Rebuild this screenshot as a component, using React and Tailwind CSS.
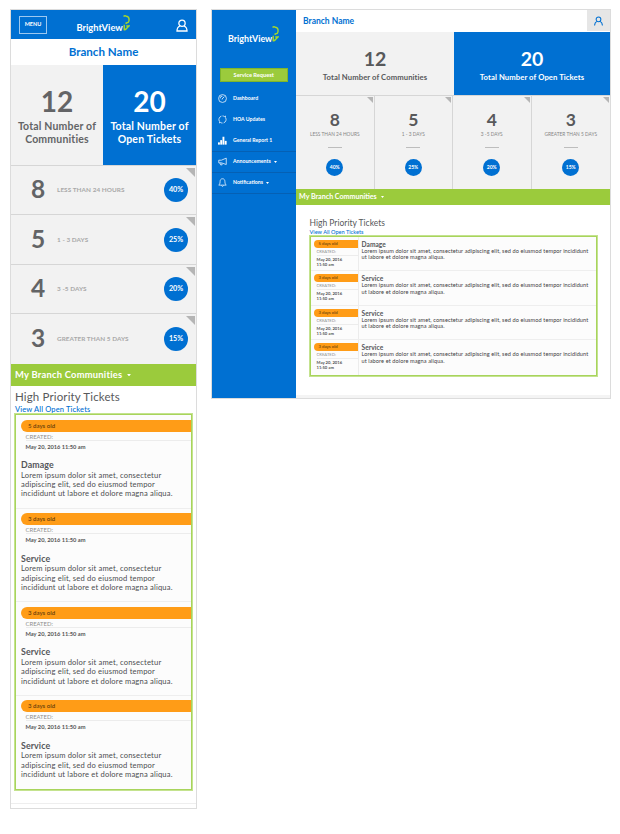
const STATS = [
  { n: "8", label: "LESS THAN 24 HOURS", pct: "40%" },
  { n: "5", label: "1 - 3 DAYS", pct: "25%" },
  { n: "4", label: "3 -5 DAYS", pct: "20%" },
  { n: "3", label: "GREATER THAN 5 DAYS", pct: "15%" },
];

const TICKETS = [
  { age: "5 days old", title: "Damage" },
  { age: "3 days old", title: "Service" },
  { age: "3 days old", title: "Service" },
  { age: "3 days old", title: "Service" },
];

function LogoMark({ className }) {
  return (
    <svg viewBox="0 0 14 32" className={className} fill="none" stroke="#a6d829" strokeWidth="2.8">
      <path d="M1 2.6 Q4 .8 6.5 2.4 Q11.5 3 12 7.5 V11.5 Q11.5 15.5 8 15.5 L5 17" />
      <path d="M2.5 19.5 V29.5 Q5 29.8 7 27 L12 22 H6.5" />
    </svg>
  );
}

function Logo({ className }) {
  return (
    <div className={"flex items-end text-white font-bold whitespace-nowrap " + className}>
      <span>BrightView</span>
      <LogoMark className="w-[7px] h-[16px] shrink-0" />
    </div>
  );
}

function UserIcon({ className, closed }) {
  return (
    <svg viewBox="0 0 24 26" className={className} fill="none" stroke="currentColor">
      <circle cx="12" cy="8.5" r="6.3" />
      {closed
        ? <path d="M8 14 C4 15.5 2 18.5 2 24 H22 C22 18.5 20 15.5 16 14" />
        : <path d="M8 14 C4 15.5 2 19 1.5 25 M16 14 C20 15.5 22 19 22.5 25" />}
    </svg>
  );
}

function Caret({ className }) {
  return (
    <svg viewBox="0 0 6 4" className={className} fill="currentColor">
      <path d="M0 0 H6 L3 4 Z" />
    </svg>
  );
}

function Corner({ className }) {
  return (
    <svg viewBox="0 0 10 10" className={"absolute " + className} fill="#b5b5b5">
      <path d="M0 0 H10 V10 Z" />
    </svg>
  );
}

function MobileTicket({ t, last }) {
  return (
    <div className={"h-[93.6px] pt-[4.5px] pl-[5px] " + (last ? "" : "border-b border-[#eeeeee]")}>
      <div className="h-[12px] rounded-l-full bg-[#ff9c17] pl-[7px] text-[6.1px] leading-[11px] font-medium text-[#5c3a0c]">{t.age}</div>
      <div className="ml-[4.5px] h-[9px] border-b border-[#ececec] text-[5.9px] leading-[9px] text-[#8f8f8f]">CREATED:</div>
      <div className="ml-[4.5px] h-[13px] text-[5.7px] leading-[12px] font-bold text-[#555555]">May 20, 2016 11:50 am</div>
      <div className="mt-[6.6px] h-[10px] text-[8.8px] leading-[10px] font-bold text-[#55565a] tracking-[0.1px]">{t.title}</div>
      <div className="pt-[0.4px] text-[7.6px] leading-[9.4px] text-[#4d4e50] tracking-[0.18px] whitespace-nowrap">
        Lorem ipsum dolor sit amet, consectetur<br />
        adipiscing elit, sed do eiusmod tempor<br />
        incididunt ut labore et dolore magna aliqua.
      </div>
    </div>
  );
}

function Mobile() {
  return (
    <div className="w-[187px] h-[800px] border border-[#dcdcdc] bg-white flex flex-col shrink-0 overflow-hidden">
      <div className="h-[29px] bg-[#0070d2] flex items-center shrink-0 pl-[8px] pr-[8px]">
        <div className="w-[28px] h-[18px] border border-[#9cc8f0] text-white text-[5.5px] font-bold flex items-center justify-center">MENU</div>
        <Logo className="text-[9.3px] leading-[11px] ml-[29.5px] -mt-[4px] [&>span]:translate-y-[2px]" />
        <UserIcon closed className="w-[12px] h-[13px] text-white stroke-[2.6] ml-auto mt-px" />
      </div>
      <div className="h-[26px] shrink-0 flex items-center justify-center text-[11.6px] font-bold text-[#0070d2]">Branch Name</div>
      <div className="h-[101px] shrink-0 flex border-b border-[#d6d6d6] text-center">
        <div className="w-[92px] bg-[#f2f2f2] text-[#636466] pt-[20px]">
          <div className="text-[28px] leading-[32px] font-bold">12</div>
          <div className="mt-[3px] text-[10.5px] leading-[13.2px] font-bold tracking-[0.18px] whitespace-nowrap">Total Number of<br />Communities</div>
        </div>
        <div className="flex-1 bg-[#0070d2] text-white pt-[20px]">
          <div className="text-[28px] leading-[32px] font-bold">20</div>
          <div className="mt-[3px] text-[10.5px] leading-[13.2px] font-bold tracking-[0.18px] whitespace-nowrap">Total Number of<br />Open Tickets</div>
        </div>
      </div>
      {STATS.map((s, i) => (
        <div key={s.n} className={"relative h-[49.4px] shrink-0 bg-[#f2f2f2] flex items-center pl-[20px] pr-[8px] " + (i < 3 ? "border-b border-[#d6d6d6]" : "")}>
          <span className="w-[26px] -mt-[2px] text-[24.5px] leading-[30px] font-bold text-[#636466]">{s.n}</span>
          <span className="flex-1 text-[6.4px] text-[#a9a9a9] font-bold tracking-[0.06px] whitespace-nowrap">{s.label}</span>
          <span className="size-[24px] rounded-full bg-[#0070d2] text-white text-[7.2px] font-bold flex items-center justify-center pt-px">{s.pct}</span>
          <Corner className="top-[2px] right-px size-[9px]" />
        </div>
      ))}
      <div className="h-[22px] shrink-0 bg-[#9bcb3c] flex items-center pl-[4px] text-white text-[9.4px] font-bold tracking-[0.23px]">
        My Branch Communities
        <Caret className="w-[4px] h-[2.5px] ml-[5px] mt-px" />
      </div>
      <div className="pl-[4px] pr-[4px] pt-[4px]">
        <div className="text-[11.5px] leading-[13px] text-[#58595b] tracking-[0.14px]">High Priority Tickets</div>
        <div className="h-[11.5px] text-[7.5px] leading-[13px] text-[#0070d2] font-medium tracking-[0.15px]">View All Open Tickets</div>
        <div className="border border-[#a8d45c] outline outline-[0.5px] outline-[#c4e38f] bg-[#fcfcfc] h-[376px]">
          {TICKETS.map((t, i) => <MobileTicket key={i} t={t} last={i === 3} />)}
        </div>
      </div>
      <div className="mt-[13px] h-px bg-[#eeeeee] shrink-0" />
    </div>
  );
}

function NavIcon({ kind }) {
  return (
    <svg viewBox="0 0 24 24" className="size-[9px] shrink-0" fill="none" stroke="#e4f1fd" strokeWidth="2.2">
      {kind === "dash" && <><circle cx="12" cy="12" r="10.5" /><path d="M10 14 L17 7 M5.5 12 A6.5 6.5 0 0 1 12 5.5 M11 14 h1" /></>}
      {kind === "sync" && <><path d="M3.5 16.5 A9.5 9.5 0 0 1 9 3 M20.500 7.500 A9.5 9.5 0 0 1 15 21 M12 2.500 A9.5 9.5 0 0 1 18.5 5 M12 21.500 A9.5 9.5 0 0 1 5.5 19" /><path d="M20 2 V7 M4 22 V17" /></>}
      {kind === "bars" && <g fill="#fff" stroke="none"><rect x="0" y="17" width="5" height="6" /><rect x="6" y="11" width="5" height="12" /><rect x="12" y="2" width="5" height="21" /><rect x="18" y="13" width="5" height="10" /></g>}
      {kind === "horn" && <><path d="M22 3 V20 L9 15.5 H2 V8.5 H9 Z" /><path d="M5 16 L7 21 H11 L10 17" /></>}
      {kind === "bell" && <><path d="M12 2 C7 2 5.5 6 5.5 10 C5.5 15 4 17 2 19 H22 C20 17 18.5 15 18.5 10 C18.5 6 17 2 12 2 Z" /><path d="M9 20 Q12 25 15 20" /></>}
    </svg>
  );
}

function NavItem({ kind, label, line, caret }) {
  return (
    <div className={"h-[21px] flex items-center pl-[6px] text-white text-[5.2px] font-bold whitespace-nowrap " + (line ? "border-t border-[#0560b4]" : "")}>
      <NavIcon kind={kind} />
      <span className="ml-[6px] pt-px">{label}</span>
      {caret && <Caret className="w-[3px] h-[2px] ml-[3px]" />}
    </div>
  );
}

function DesktopTicket({ t, last }) {
  return (
    <div className={"h-[34.6px] flex pl-[3px] " + (last ? "" : "border-b border-[#eeeeee]")}>
      <div className="w-[45px] border-r border-[#ececec] pt-[3px]">
        <div className="h-[8px] rounded-l-full bg-[#ff9c17] pl-[5px] text-[4.3px] leading-[8px] font-medium text-[#5c3a0c]">{t.age}</div>
        <div className="ml-[3px] h-[8px] border-b border-[#ececec] text-[4.2px] leading-[8px] text-[#8f8f8f]">CREATED:</div>
        <div className="ml-[3px] pt-[1px] text-[4.2px] leading-[5.2px] font-bold text-[#555555] whitespace-nowrap">May 20, 2016<br />11:50 am</div>
      </div>
      <div className="pl-[3px] pt-[3px] whitespace-nowrap">
        <div className="text-[6.6px] leading-[8px] font-bold text-[#55565a] tracking-[0.05px]">{t.title}</div>
        <div className="text-[5.6px] leading-[6.8px] text-[#3f4042] tracking-[0.09px]">
          Lorem ipsum dolor sit amet, consectetur adipiscing elit, sed do eiusmod tempor incididunt<br />
          ut labore et dolore magna aliqua.
        </div>
      </div>
    </div>
  );
}

function Desktop() {
  return (
    <div className="w-[400px] h-[390px] border border-[#dcdcdc] bg-white flex shrink-0 overflow-hidden">
      <div className="w-[84px] shrink-0 bg-[#0070d2]">
        <Logo className="text-[8.9px] leading-[11px] pt-[16px] pl-[16px] [&>span]:translate-y-[1.5px]" />
        <div className="ml-[7.5px] mr-[8px] mt-[26px] h-[14px] bg-[#9bcb3c] border border-[#7fb52c] text-white text-[5.7px] font-bold flex items-center justify-center">Service Request</div>
        <div className="mt-[5.5px]">
          <NavItem kind="dash" label="Dashboard" />
          <NavItem kind="sync" label="HOA Updates" />
          <NavItem kind="bars" label="General Report 1" />
          <NavItem kind="horn" label="Announcements" line caret />
          <NavItem kind="bell" label="Notifications" line caret />
          <div className="h-px bg-[#0560b4]" />
        </div>
      </div>
      <div className="flex-1 flex flex-col">
        <div className="h-[22px] shrink-0 flex justify-between">
          <div className="pl-[7px] text-[8.5px] leading-[22px] font-bold text-[#0070d2]">Branch Name</div>
          <div className="w-[23px] h-[21px] bg-[#e6e6e6] flex items-center justify-center">
            <UserIcon className="w-[9px] h-[10px] text-[#0070d2] stroke-[2.8]" />
          </div>
        </div>
        <div className="h-[64px] shrink-0 flex text-center border-b border-[#d6d6d6]">
          <div className="w-[158px] bg-[#f2f2f2] text-[#58595b] pt-[15px]">
            <div className="text-[19.5px] leading-[24px] font-bold">12</div>
            <div className="text-[7.7px] leading-[12px] font-bold tracking-[0.08px]">Total Number of Communities</div>
          </div>
          <div className="flex-1 bg-[#0070d2] text-white pt-[15px]">
            <div className="text-[19.5px] leading-[24px] font-bold">20</div>
            <div className="text-[7.7px] leading-[12px] font-bold tracking-[0.08px]">Total Number of Open Tickets</div>
          </div>
        </div>
        <div className="h-[93px] shrink-0 grid grid-cols-4 bg-[#f2f2f2] text-center">
          {STATS.map((s, i) => (
            <div key={s.n} className={"relative flex flex-col items-center pt-[13px] " + (i < 3 ? "border-r border-[#d6d6d6]" : "")}>
              <div className="text-[17.5px] leading-[22px] font-bold text-[#58595b]">{s.n}</div>
              <div className="text-[4.8px] leading-[6px] text-[#858585] whitespace-nowrap">{s.label}</div>
              <div className="mt-[10px] w-[14px] h-px bg-[#bdbdbd]" />
              <div className="mt-[10.5px] size-[17px] rounded-full bg-[#0070d2] text-white text-[5px] font-bold flex items-center justify-center pt-px">{s.pct}</div>
              <Corner className="top-px right-px size-[6px]" />
            </div>
          ))}
        </div>
        <div className="h-[15.5px] shrink-0 bg-[#9bcb3c] flex items-center pl-[3px] pt-px text-white text-[7.1px] font-bold">
          My Branch Communities
          <Caret className="w-[3px] h-[2px] ml-[4px]" />
        </div>
        <div className="pl-[13.5px] pr-[13px] pt-[13px]">
          <div className="text-[8.5px] leading-[10px] text-[#58595b]">High Priority Tickets</div>
          <div className="text-[5.6px] leading-[8px] text-[#0070d2] font-medium">View All Open Tickets</div>
          <div className="border border-[#a8d45c] outline outline-[0.5px] outline-[#c4e38f] bg-[#fcfcfc] h-[140px]">
            {TICKETS.map((t, i) => <DesktopTicket key={i} t={t} last={i === 3} />)}
          </div>
        </div>
        <div className="mt-auto h-[3px] bg-[#f4f4f4]" />
      </div>
    </div>
  );
}

export default function App() {
  return (
    <div className="w-[620px] h-[834px] bg-white flex items-start gap-[14px] pl-[10px] pt-[9px] font-['Lato','Liberation_Sans',sans-serif]">
      <Mobile />
      <Desktop />
    </div>
  );
}
